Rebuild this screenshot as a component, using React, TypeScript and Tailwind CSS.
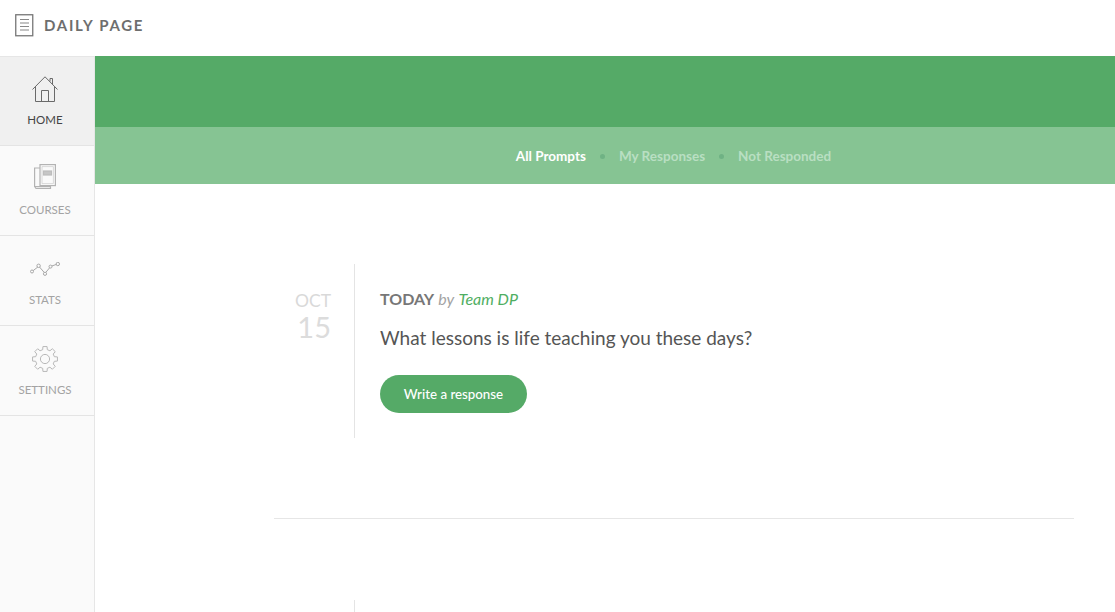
import React from "react";

const HomeIcon = () => (
  <svg width="26" height="26" viewBox="0 0 26 26" fill="none" stroke="#6a6a6a" strokeWidth="1">
    <path d="M0.5 13.5 L13 0.8 L25.5 13.5" />
    <path d="M3.5 10.5 V25.5 H22.5 V10.5" />
    <path d="M9.5 25.5 V14.5 H16.5 V25.5" />
    <path d="M18 5.5 V2.5 H20.5 V8.5" />
  </svg>
);

const CoursesIcon = () => (
  <svg width="22" height="25" viewBox="0 0 22 25" fill="none" stroke="#b3b3b3" strokeWidth="1.2">
    <path d="M6 4 H0.6 V22.5 H16.5 V24.4 H2 L0.6 22.5" />
    <rect x="6" y="0.6" width="15.4" height="21" fill="#fafafa" />
    <path d="M8 2.6 H19.4 V19.6 H8 Z" stroke="#d0d0d0" strokeWidth="0.8" />
    <rect x="9.5" y="7" width="8" height="4" fill="#c6c6c6" stroke="#bdbdbd" />
  </svg>
);

const StatsIcon = () => (
  <svg width="30" height="14" viewBox="0 0 30 14" fill="none" stroke="#a8a8a8" strokeWidth="1">
    <path d="M3.2 8.6 L7.8 5 M9.5 5 L14.2 10.4 M15.8 10.4 L19.6 5.8 M21.8 4 L26.4 2.4" />
    <circle cx="2" cy="9.5" r="1.5" />
    <circle cx="8.6" cy="3.8" r="1.7" />
    <circle cx="15" cy="11.8" r="1.6" />
    <circle cx="20.5" cy="4.6" r="1.5" />
    <circle cx="27.8" cy="2" r="1.7" />
  </svg>
);

const gearPath = (() => {
  const pts: string[] = [];
  const n = 8;
  const c = 13;
  const rOut = 12.6;
  const rIn = 9.6;
  for (let i = 0; i < n; i++) {
    const a = (i * 2 * Math.PI) / n - Math.PI / 2;
    const s = Math.PI / n;
    const p = (r: number, t: number) =>
      `${(c + r * Math.cos(t)).toFixed(2)} ${(c + r * Math.sin(t)).toFixed(2)}`;
    pts.push(`${i === 0 ? "M" : "L"}${p(rOut, a - s * 0.42)}`);
    pts.push(`L${p(rOut, a + s * 0.42)}`);
    pts.push(`L${p(rIn, a + s * 0.62)}`);
    pts.push(`L${p(rIn, a + s * 1.38)}`);
  }
  return pts.join(" ") + " Z";
})();

const SettingsIcon = () => (
  <svg width="26" height="26" viewBox="0 0 26 26" fill="none" stroke="#b8b8b8" strokeWidth="1">
    <circle cx="13" cy="13" r="4.6" />
    <path d={gearPath} strokeLinejoin="round" />
  </svg>
);

const NavItem = ({
  icon,
  label,
  active,
  iconClass,
}: {
  icon: React.ReactNode;
  label: string;
  active?: boolean;
  iconClass: string;
}) => (
  <div
    className={`h-[90px] flex flex-col items-center pr-[4px] border-b border-[#e4e4e4] ${
      active ? "bg-[#f0f0f0] shadow-[inset_0_1px_0_#e6e6e6]" : ""
    }`}
  >
    <div className={`h-[56px] flex justify-center ${iconClass}`}>{icon}</div>
    <div
      className={`text-[11.5px] leading-[16px] ${
        active ? "text-[#444]" : "text-[#a3a3a3]"
      }`}
    >
      {label}
    </div>
  </div>
);

const Dot = () => <span className="w-[5px] h-[5px] rounded-full bg-[#6fb284]" />;

export default function App() {
  return (
    <div className="w-[1115px] h-[612px] overflow-hidden bg-white flex flex-col font-['Lato',sans-serif]">
      <header className="h-[56px] flex items-center pl-[15px] pb-[6px] shrink-0">
        <svg width="19" height="23" viewBox="0 0 19 23" fill="none" className="mr-[10px]">
          <rect x="0.75" y="0.75" width="17" height="21" stroke="#777" strokeWidth="1.3" />
          <path d="M5 5.5 H14 M5 9 H14 M5 12.5 H14 M5 16 H14" stroke="#888" strokeWidth="1.1" />
        </svg>
        <span className="text-[15px] font-bold tracking-[1.7px] text-[#6e6e6e]">DAILY PAGE</span>
      </header>
      <div className="flex flex-1 min-h-0">
        <aside className="w-[95px] shrink-0 bg-[#fafafa] border-r border-[#e6e6e6]">
          <NavItem icon={<HomeIcon />} label="HOME" active iconClass="pt-[20px]" />
          <NavItem icon={<CoursesIcon />} label="COURSES" iconClass="pt-[18px]" />
          <NavItem icon={<StatsIcon />} label="STATS" iconClass="pt-[26px]" />
          <NavItem icon={<SettingsIcon />} label="SETTINGS" iconClass="pt-[20px]" />
        </aside>
        <main className="flex-1 min-w-0">
          <div className="h-[71px] bg-[#55aa67]" />
          <nav className="h-[57px] bg-[#86c493] flex items-center justify-center gap-[14px] text-[13.5px] font-bold pl-[137px] pt-[1px]">
            <span className="text-white">All Prompts</span>
            <Dot />
            <span className="text-[#b9dfc2]">My Responses</span>
            <Dot />
            <span className="text-[#b9dfc2]">Not Responded</span>
          </nav>
          <div className="pl-[179px] pr-[41px] pt-[80px]">
            <article className="flex h-[174px]">
              <div className="w-[81px] shrink-0 border-r border-[#e4e4e4] pr-[23px] pt-[27px] flex flex-col items-end">
                <div className="text-[17.5px] leading-[20px] text-[#d9d9d9]">OCT</div>
                <div className="text-[29px] leading-[31px] text-[#dcdcdc]">15</div>
              </div>
              <div className="pl-[25px] pt-[25px]">
                <div className="text-[16px] leading-[20px]">
                  <span className="font-bold text-[#777]">TODAY</span>{" "}
                  <span className="italic text-[#a3a3a3]">by</span>{" "}
                  <span className="italic text-[#4fae62]">Team DP</span>
                </div>
                <p className="mt-[15px] text-[19px] leading-[28px] text-[#555]">
                  What lessons is life teaching you these days?
                </p>
                <button className="mt-[23px] w-[147px] h-[38px] pt-[1px] rounded-full bg-[#55aa67] text-white text-[13.3px] font-medium">
                  Write a response
                </button>
              </div>
            </article>
            <div className="mt-[80px] h-px bg-[#e6e6e6]" />
            <div className="mt-[81px] ml-[80px] h-[40px] border-l border-[#e4e4e4]" />
          </div>
        </main>
      </div>
    </div>
  );
}
